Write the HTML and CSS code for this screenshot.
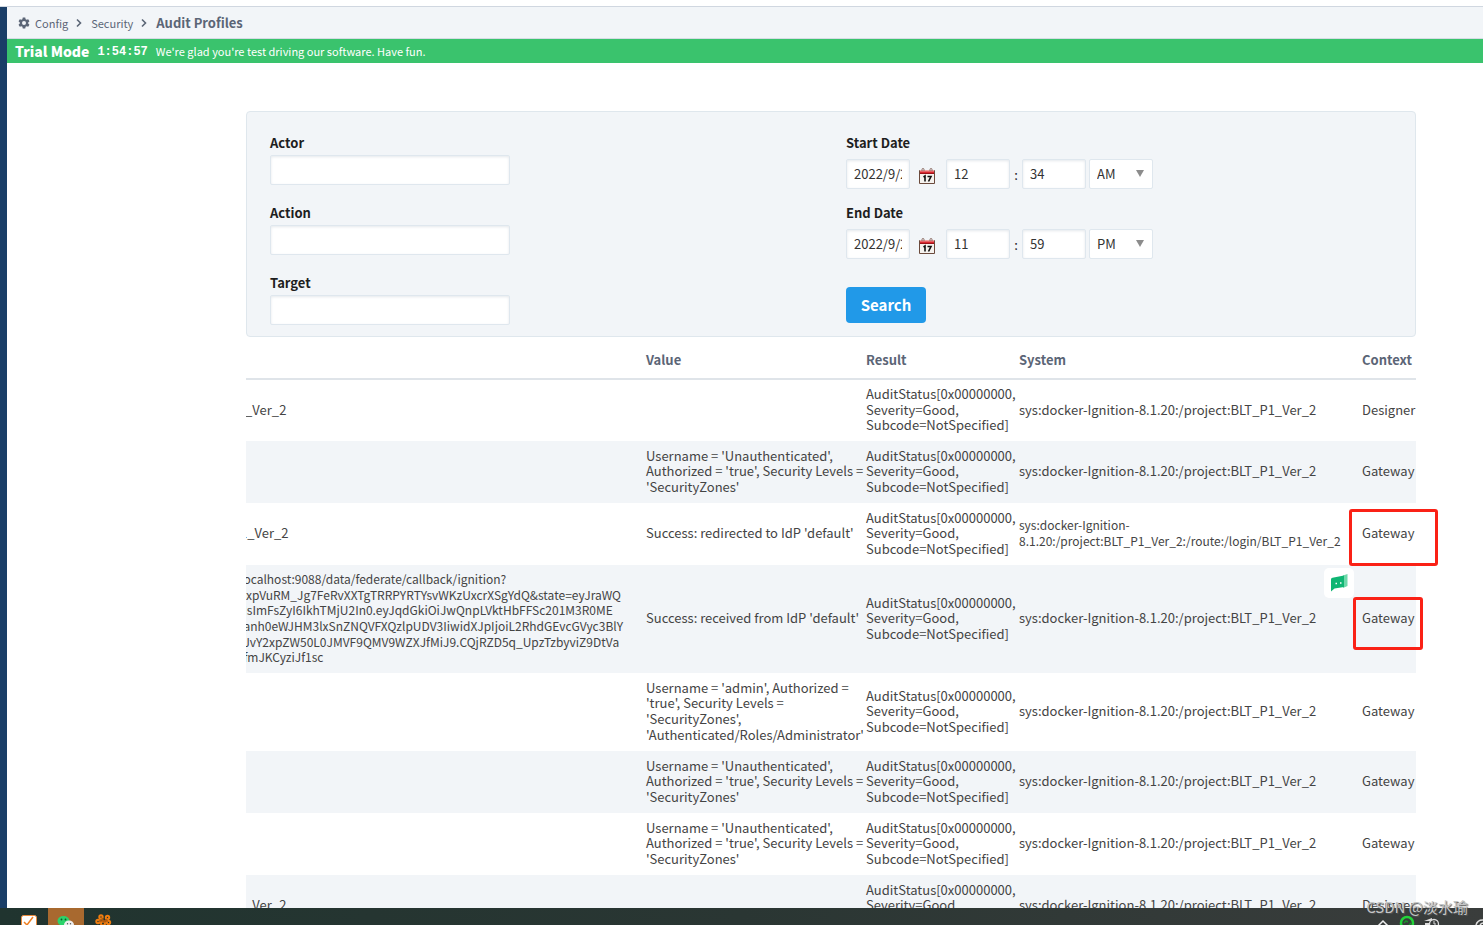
FILE: index.html
```html
<!DOCTYPE html>
<html lang="en">
<head>
<meta charset="utf-8">
<title>Audit Profiles</title>
<link rel="stylesheet" href="styles.css">
</head>
<body>
<div class="page">
  <div class="app">
    <aside class="rail"></aside>
    <div class="main">
      <nav class="crumbs" aria-label="Breadcrumb">
        <svg class="gear" viewBox="0 0 24 24"><path fill="currentColor" fill-rule="evenodd" d="M9.500 1h5l.7 3.300 2 1.200 3.200-1.100 2.500 4.300-2.500 2.200v2.200l2.500 2.200-2.500 4.300-3.200-1.100-2 1.200-.7 3.300h-5l-.7-3.300-2-1.200-3.200 1.100-2.500-4.300 2.500-2.200v-2.200L1.100 8.700l2.500-4.300 3.200 1.100 2-1.200zM12 8a4 4 0 1 0 0 8 4 4 0 0 0 0-8z"/></svg>
        <a href="#">Config</a>
        <svg class="chev" viewBox="0 0 6 10"><path d="M1 1.500 4.500 5 1 8.500"/></svg>
        <a href="#">Security</a>
        <svg class="chev" viewBox="0 0 6 10"><path d="M1 1.500 4.500 5 1 8.500"/></svg>
        <strong>Audit Profiles</strong>
      </nav>
      <div class="trial">
        <strong class="trial-title">Trial Mode</strong>
        <span class="trial-time">1:54:57</span>
        <span class="trial-note">We're glad you're test driving our software. Have fun.</span>
      </div>
      <main class="content">
        <form class="filter">
          <div class="fields">
            <div class="field"><label for="actor">Actor</label><input class="box wide" id="actor" type="text"></div>
            <div class="field"><label for="action">Action</label><input class="box wide" id="action" type="text"></div>
            <div class="field"><label for="target">Target</label><input class="box wide" id="target" type="text"></div>
          </div>
          <div class="dates">
            <div class="date-group">
              <label for="sd">Start Date</label>
              <div class="date-row">
                <input class="box small" id="sd" type="text" value="2022/9/22">
                <button class="cal" type="button" aria-label="Pick start date"><svg viewBox="0 0 16 16"><path d="M.5 2.500h15v13H.5z" fill="#f6f3ef" stroke="#6b4a3c"/><path d="M1 2h14v4H1z" fill="#d8282f"/><path d="M1 2h14v1.500H1z" fill="#f0a0a0"/><path d="M1 5h14v1H1z" fill="#9c1118"/><path d="M3 3V1.500a1 1 0 0 1 2 0V3M11 3V1.500a1 1 0 0 1 2 0V3" fill="none" stroke="#8a6a60"/><path d="M4.500 9 6 8v5.500M8.500 8.500H12L9.500 13.500" fill="none" stroke="#111" stroke-width="1.600"/></svg></button>
                <input class="box small" type="text" value="12" aria-label="Start hour">
                <span class="colon">:</span>
                <input class="box small" type="text" value="34" aria-label="Start minute">
                <span class="pick"><select class="box small" aria-label="Start period"><option>AM</option><option>PM</option></select></span>
              </div>
            </div>
            <div class="date-group">
              <label for="ed">End Date</label>
              <div class="date-row">
                <input class="box small" id="ed" type="text" value="2022/9/22">
                <button class="cal" type="button" aria-label="Pick end date"><svg viewBox="0 0 16 16"><path d="M.5 2.500h15v13H.5z" fill="#f6f3ef" stroke="#6b4a3c"/><path d="M1 2h14v4H1z" fill="#d8282f"/><path d="M1 2h14v1.500H1z" fill="#f0a0a0"/><path d="M1 5h14v1H1z" fill="#9c1118"/><path d="M3 3V1.500a1 1 0 0 1 2 0V3M11 3V1.500a1 1 0 0 1 2 0V3" fill="none" stroke="#8a6a60"/><path d="M4.500 9 6 8v5.500M8.500 8.500H12L9.500 13.500" fill="none" stroke="#111" stroke-width="1.600"/></svg></button>
                <input class="box small" type="text" value="11" aria-label="End hour">
                <span class="colon">:</span>
                <input class="box small" type="text" value="59" aria-label="End minute">
                <span class="pick"><select class="box small" aria-label="End period"><option>PM</option><option>AM</option></select></span>
              </div>
            </div>
            <button class="search" type="button">Search</button>
          </div>
        </form>
        <div class="scroller">
          <table class="log">
            <colgroup><col><col class="c-value"><col class="c-result"><col class="c-system"><col class="c-context"></colgroup>
            <thead><tr><th></th><th>Value</th><th>Result</th><th>System</th><th>Context</th></tr></thead>
            <tbody>
              <tr><td>/_Ver_2</td><td></td><td>AuditStatus[0x00000000, Severity=Good, Subcode=NotSpecified]</td><td>sys:docker-Ignition-8.1.20:/project:BLT_P1_Ver_2</td><td>Designer</td></tr>
              <tr><td></td><td>Username = 'Unauthenticated',<br>Authorized = 'true', Security Levels =<br>'SecurityZones'</td><td>AuditStatus[0x00000000, Severity=Good, Subcode=NotSpecified]</td><td>sys:docker-Ignition-8.1.20:/project:BLT_P1_Ver_2</td><td>Gateway</td></tr>
              <tr><td>1_Ver_2</td><td>Success: redirected to IdP 'default'</td><td>AuditStatus[0x00000000, Severity=Good, Subcode=NotSpecified]</td><td class="long">sys:docker-Ignition-<br>8.1.20:/project:BLT_P1_Ver_2:/route:/login/BLT_P1_Ver_2</td><td>Gateway</td></tr>
              <tr class="lines-6"><td class="long">localhost:9088/data/federate/callback/ignition?<br>xxpVuRM_Jg7FeRvXXTgTRRPYRTYsvWKzUxcrXSgYdQ&amp;state=eyJraWQ<br>iIsImFsZyI6IkhTMjU2In0.eyJqdGkiOiJwQnpLVktHbFFSc201M3R0ME<br>lanh0eWJHM3lxSnZNQVFXQzlpUDV3IiwidXJpIjoiL2RhdGEvcGVyc3BlY<br>lJvY2xpZW50L0JMVF9QMV9WZXJfMiJ9.CQjRZD5q_UpzTzbyviZ9DtVa<br>lfmJKCyziJf1sc</td><td>Success: received from IdP 'default'</td><td>AuditStatus[0x00000000, Severity=Good, Subcode=NotSpecified]</td><td>sys:docker-Ignition-8.1.20:/project:BLT_P1_Ver_2</td><td>Gateway</td></tr>
              <tr class="lines-4"><td></td><td>Username = 'admin', Authorized =<br>'true', Security Levels =<br>'SecurityZones',<br>'Authenticated/Roles/Administrator'</td><td>AuditStatus[0x00000000, Severity=Good, Subcode=NotSpecified]</td><td>sys:docker-Ignition-8.1.20:/project:BLT_P1_Ver_2</td><td>Gateway</td></tr>
              <tr><td></td><td>Username = 'Unauthenticated',<br>Authorized = 'true', Security Levels =<br>'SecurityZones'</td><td>AuditStatus[0x00000000, Severity=Good, Subcode=NotSpecified]</td><td>sys:docker-Ignition-8.1.20:/project:BLT_P1_Ver_2</td><td>Gateway</td></tr>
              <tr><td></td><td>Username = 'Unauthenticated',<br>Authorized = 'true', Security Levels =<br>'SecurityZones'</td><td>AuditStatus[0x00000000, Severity=Good, Subcode=NotSpecified]</td><td>sys:docker-Ignition-8.1.20:/project:BLT_P1_Ver_2</td><td>Gateway</td></tr>
              <tr><td>/_Ver_2</td><td></td><td>AuditStatus[0x00000000, Severity=Good, Subcode=NotSpecified]</td><td>sys:docker-Ignition-8.1.20:/project:BLT_P1_Ver_2</td><td>Designer</td></tr>
            </tbody>
          </table>
        </div>
      </main>
    </div>
  </div>
  <footer class="taskbar">
    <svg class="task" viewBox="0 0 36 17"><rect x="9.500" y="7.500" width="15" height="14" rx="2" fill="#fff" stroke="#e98a3c"/><path d="M12 14l3 3 6-8" fill="none" stroke="#ee7f22" stroke-width="1.500"/></svg>
    <svg class="task active" viewBox="0 0 36 17"><ellipse cx="15.500" cy="13" rx="6" ry="5" fill="#2bd36a"/><circle cx="13.500" cy="11.500" r=".9" fill="#14512f"/><circle cx="17.500" cy="11.500" r=".9" fill="#14512f"/><ellipse cx="21" cy="17" rx="5" ry="4.500" fill="#eee"/><circle cx="19.500" cy="15.800" r=".7" fill="#555"/><circle cx="22.500" cy="15.800" r=".7" fill="#555"/></svg>
    <svg class="task" viewBox="0 0 36 17"><g fill="none" stroke="#f07d10" stroke-width="2"><circle cx="17" cy="9" r="1.700"/><circle cx="23.500" cy="9.500" r="1.700"/><circle cx="14" cy="13.500" r="1.700"/><circle cx="24.500" cy="14.500" r="1.700"/><circle cx="19" cy="15.500" r="2"/></g><path d="M15 13h9M18 10l2 4 3-3" stroke="#b55a0c" stroke-width="1.500" fill="none"/></svg>
    <svg class="tray" viewBox="0 0 110 17"><path d="M5 18l5-5 5 5" fill="none" stroke="#eee" stroke-width="1.500"/><circle cx="34" cy="15" r="6" fill="none" stroke="#23d33a" stroke-width="2.500"/><path d="M31 15l2-2 2 1M36 17l2-2" fill="none" stroke="#1c8f2b" stroke-width="1.500"/><path d="M51 13l8-3v3h-8zM52 15h7v3h-7z" fill="#ddd"/><circle cx="61" cy="16" r="4.500" fill="#393c3b" stroke="#ddd" stroke-width="1.300"/><path d="M61 13v3h2" stroke="#ddd" fill="none"/><path d="M103 17a7 7 0 0 1 7-5M107 17a4 4 0 0 1 3-2" stroke="#ddd" fill="none" stroke-width="1.500"/></svg>
  </footer>
  <div class="mark mark-first"></div>
  <div class="mark mark-second"></div>
  <div class="chat"><svg viewBox="0 0 30 30"><path d="M19 7.500 23.500 6v12L19 20z" fill="#6fd8aa"/><path d="M7 11.500Q7 10 8.500 9.700L20 7.500v11.500L10.500 20.500 7 23.500z" fill="#0fb573"/><path d="M11.500 15.500h1.500M16 15h1.500" stroke="#fff" stroke-width="1.500"/></svg></div>
  <div class="credit">CSDN @淡水瑜</div>
</div>
</body>
</html>
```
FILE: styles.css
```css
* { box-sizing: border-box; }
body, input, select, button {
  font-family: "Noto Sans CJK SC", "Open Sans", sans-serif;
  font-size: 13px;
}
body { margin: 0; color: #444; background: #fff; overflow: hidden; }
.page { position: relative; display: flex; flex-direction: column; height: 100vh; }
.app { display: flex; flex: 1; min-height: 0; margin-top: 6px; border-top: 1px solid #d0d7e0; }
.rail { width: 7px; flex: none; background: #1a3e67; }
.main { flex: 1; min-width: 0; display: flex; flex-direction: column; }
.crumbs {
  flex: none; display: flex; align-items: center; height: 32px; padding-left: 11px;
  background: #f2f5f8; border-bottom: 1px solid #d5dce4; color: #5b6576; font-size: 11px;
}
.crumbs a { color: inherit; text-decoration: none; }
.crumbs strong { font-size: 13px; }
.gear { width: 12px; height: 12px; margin-right: 5px; }
.chev { width: 6px; height: 10px; margin: 0 9px 0 8px; fill: none; stroke: currentColor; stroke-width: 1.6; }
.trial {
  flex: none; display: flex; align-items: center; height: 24px; padding-left: 8px; gap: 8px;
  background: #3ac36d; color: #fff;
}
.trial-title { font-size: 14px; font-weight: 900; }
.trial-time { padding-top: 2px; font: bold 12px "Liberation Mono", monospace; }
.trial-note { font-size: 11px; }
.content { flex: 1; min-height: 0; overflow: hidden; padding: 48px 67px 0 239px; }
.filter {
  display: grid; grid-template-columns: 576px 1fr; height: 226px; padding: 21px 23px 0;
  background: #f2f5f8; border: 1px solid #dfe7ed; border-radius: 4px; color: #1e1e1e;
}
.filter label { display: block; height: 22px; line-height: 20px; font-weight: bold; }
.field { height: 70px; }
.box {
  height: 30px; padding: 0 7px 2px; border: 1px solid #dfe7ee; border-radius: 2px; background: #fff;
  color: #333; box-shadow: inset 0 1px 3px #e4e8ec;
}
.wide { width: 240px; display: block; }
.small { width: 64px; }
.date-group { height: 70px; }
.date-group label { height: 26px; }
.date-row { display: flex; align-items: center; }
.cal { width: 16px; height: 16px; margin: 4px 11px 0 9px; padding: 0; border: 0; background: none; }
.cal svg { display: block; }
.colon { width: 12px; text-align: center; }
.pick { position: relative; margin-left: 3px; }
.pick select { appearance: none; box-shadow: none; display: block; }
.pick::after {
  content: ""; position: absolute; right: 9px; top: 11px; pointer-events: none;
  border: 4px solid transparent; border-top: 7px solid #8c8c8c; border-bottom: 0;
}
.search {
  width: 80px; height: 36px; margin-top: 14px; padding: 0 0 2px; border: 0; border-radius: 4px;
  background: #2199e8; color: #fff; font-size: 15px; font-weight: bold;
}
.scroller { overflow: hidden; }
.log { width: calc(100% + 6px); margin-left: -6px; table-layout: fixed; border-collapse: collapse; line-height: 1.2; }
.c-value { width: 220px; }
.c-result { width: 153px; }
.c-system { width: 343px; }
.c-context { width: 58px; }
.log th { height: 42px; padding: 8px 4px 4px; text-align: left; color: #5b6576; border-bottom: 2px solid #dfe4e9; }
.log td { height: 62px; padding: 6px 0 8px 4px; vertical-align: middle; white-space: nowrap; }
.log td:first-child { padding-left: 0; }
.log td:nth-child(3) { white-space: normal; }
.log .long { font-size: 12px; line-height: 1.3; }
.log tbody tr:nth-child(even) { background: #f2f5f8; }
.log .lines-4 td { height: 78px; }
.log .lines-6 td { height: 108px; }
.taskbar { flex: none; display: flex; height: 17px; padding-left: 12px; background: linear-gradient(90deg, #20342f, #2a3633 50%, #3a3d3c); }
.task { width: 36px; height: 17px; }
.active { background: #a8692f; }
.tray { width: 110px; height: 17px; margin-left: auto; }
.mark { position: absolute; border: 3px solid #fa2116; border-radius: 3px; }
.mark-first { left: 1349px; top: 509px; width: 89px; height: 57px; }
.mark-second { left: 1353px; top: 597px; width: 70px; height: 53px; }
.chat { position: absolute; left: 1324px; top: 568px; width: 30px; height: 30px; background: #fff; border-radius: 5px; }
.credit {
  position: absolute; right: 15px; bottom: 8px; font-size: 15px; line-height: 20px;
  color: #c4c6c6; text-shadow: 1px 1px 1px #555;
}
```
